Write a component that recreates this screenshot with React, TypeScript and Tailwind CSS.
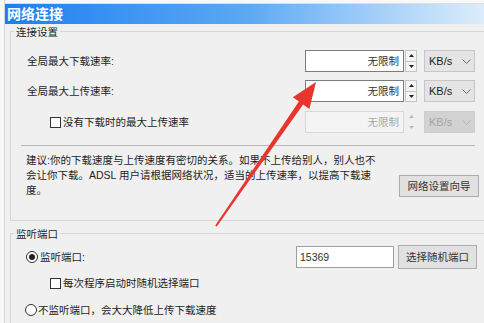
import React from "react";

function Spinner({ disabled = false }: { disabled?: boolean }) {
  const c = disabled ? "#b8b8b8" : "#222";
  return (
    <div
      className={
        "ml-[1px] flex h-full w-[12px] flex-col " +
        (disabled ? "" : "border border-[#c4c4c4] bg-[#f4f4f4]")
      }
    >
      <div className={"flex flex-1 items-center justify-center " + (disabled ? "" : "border-b border-[#c4c4c4]")}>
        <svg width="5" height="3" viewBox="0 0 5 3">
          <polygon points="2.5,0 5,3 0,3" fill={c} />
        </svg>
      </div>
      <div className="flex flex-1 items-center justify-center">
        <svg width="5" height="3" viewBox="0 0 5 3">
          <polygon points="0,0 5,0 2.5,3" fill={c} />
        </svg>
      </div>
    </div>
  );
}

function Combo({ disabled = false }: { disabled?: boolean }) {
  return (
    <div
      className={
        "ml-[7px] flex h-full w-[51px] items-center justify-between border pl-[4px] pr-[3px] text-[11px] " +
        (disabled
          ? "border-[#cfcfcf] bg-[#d2d2d2] text-[#a4a4a4]"
          : "border-[#c6c6c6] bg-[#e4e4e4] text-[#1e1e1e]")
      }
    >
      <span>KB/s</span>
      <svg width="9" height="5" viewBox="0 0 9 5">
        <polyline
          points="0.5,0.5 4.5,4.5 8.5,0.5"
          fill="none"
          stroke={disabled ? "#b5b5b5" : "#6a6a6a"}
          strokeWidth="1"
        />
      </svg>
    </div>
  );
}

function SpeedInput({ disabled = false }: { disabled?: boolean }) {
  return (
    <div className="flex h-[22px] items-stretch">
      <div
        className={
          "flex w-[99px] items-center justify-end border pr-[4px] " +
          (disabled
            ? "border-[#d8d8d8] bg-[#f4f4f4] text-[#a8a8a8]"
            : "border-[#7c7c7c] bg-white text-[#333]")
        }
      >
        无限制
      </div>
      <Spinner disabled={disabled} />
      <Combo disabled={disabled} />
    </div>
  );
}

function CheckBox() {
  return <span className="inline-block h-[11px] w-[11px] shrink-0 border border-[#333] bg-white" />;
}

function Radio({ checked = false }: { checked?: boolean }) {
  return (
    <span className="flex h-[12px] w-[12px] shrink-0 items-center justify-center rounded-full border border-[#333] bg-white">
      {checked && <span className="h-[6px] w-[6px] rounded-full bg-[#222]" />}
    </span>
  );
}

function Group({ title, className, children }: { title: string; className?: string; children: React.ReactNode }) {
  return (
    <div className={"relative ml-[5px] border-l border-t border-[#d6d6d6] " + (className ?? "")}>
      <span className="absolute -top-[6px] left-[3px] bg-[#f0f0f0] px-[2px] leading-[12px]">{title}</span>
      {children}
    </div>
  );
}

export default function App() {
  return (
    <div className="relative flex h-[323px] w-[484px] overflow-hidden bg-[#f0f0f0] font-['Liberation_Sans','Noto_Sans_CJK_SC',sans-serif] text-[10.5px] leading-[15px] text-[#1e1e1e]">
      <div className="w-[5px] shrink-0 border-r border-[#d4d4d4] bg-[#f8f8f8]" />
      <div className="flex flex-1 flex-col">
        <div className="h-[4px] border-b border-[#dedede] bg-[#f8f8f8]" />
        <div className="flex h-[20px] items-center bg-gradient-to-r from-[#1a7ff0] via-[#5aa8f3] to-[#dcedfb] pl-[2px] text-[14px] font-bold text-white">
          网络连接
        </div>

        {/* 连接设置 */}
        <Group title="连接设置" className="mt-[7px] h-[190px] border-b">
          <div className="flex flex-col pt-[18px]">
            <div className="flex items-center pl-[16px] pr-[9px]">
              <span className="flex-1">全局最大下载速率:</span>
              <SpeedInput />
            </div>
            <div className="mt-[8px] flex items-center pl-[16px] pr-[9px]">
              <span className="flex-1">全局最大上传速率:</span>
              <SpeedInput />
            </div>
            <div className="mt-[9px] flex items-center pl-[39px] pr-[9px]">
              <span className="flex flex-1 items-center gap-[2px]">
                <CheckBox />
                没有下载时的最大上传速率
              </span>
              <SpeedInput disabled />
            </div>
            <div className="ml-[10px] mr-[9px] mt-[12px] h-px bg-[#b9b9b9]" />
            <div className="mt-[7px] flex items-end justify-between pl-[15px] pr-[5px]">
              <p className="whitespace-nowrap">
                建议:你的下载速度与上传速度有密切的关系。如果不上传给别人，别人也不
                <br />
                会让你下载。ADSL 用户请根据网络状况，适当的上传速率，以提高下载速
                <br />
                度。
              </p>
              <button className="mb-[1px] h-[22px] w-[80px] border border-[#adadad] bg-[#e1e1e1] text-[#333]">
                网络设置向导
              </button>
            </div>
          </div>
        </Group>

        {/* 监听端口 */}
        <Group title="监听端口" className="mt-[12px] flex-1">
          <div className="flex flex-col pt-[11px]">
            <div className="flex h-[24px] items-center pl-[15px] pr-[7px]">
              <span className="flex flex-1 items-center gap-[2px]">
                <Radio checked />
                监听端口:
              </span>
              <div className="flex h-[22px] w-[98px] items-center border border-[#9e9e9e] bg-white pl-[3px] text-[#333]">
                15369
              </div>
              <button className="ml-[4px] h-[24px] w-[79px] border border-[#adadad] bg-[#e1e1e1] text-[#333]">
                选择随机端口
              </button>
            </div>
            <div className="mt-[7px] flex h-[14px] items-center gap-[2px] pl-[39px]">
              <CheckBox />
              每次程序启动时随机选择端口
            </div>
            <div className="mt-[13px] flex h-[14px] items-center gap-[1px] pl-[14px]">
              <Radio />
              不监听端口，会大大降低上传下载速度
            </div>
          </div>
        </Group>
      </div>

      {/* red arrow annotation */}
      <svg className="pointer-events-none absolute left-0 top-0" width="484" height="323" viewBox="0 0 484 323">
        <polygon
          points="316,82 309.4,108.9 303.1,104.4 216.8,226.6 215.2,225.4 298.9,101.6 292.8,97.3"
          fill="#e8362e"
        />
      </svg>
    </div>
  );
}
